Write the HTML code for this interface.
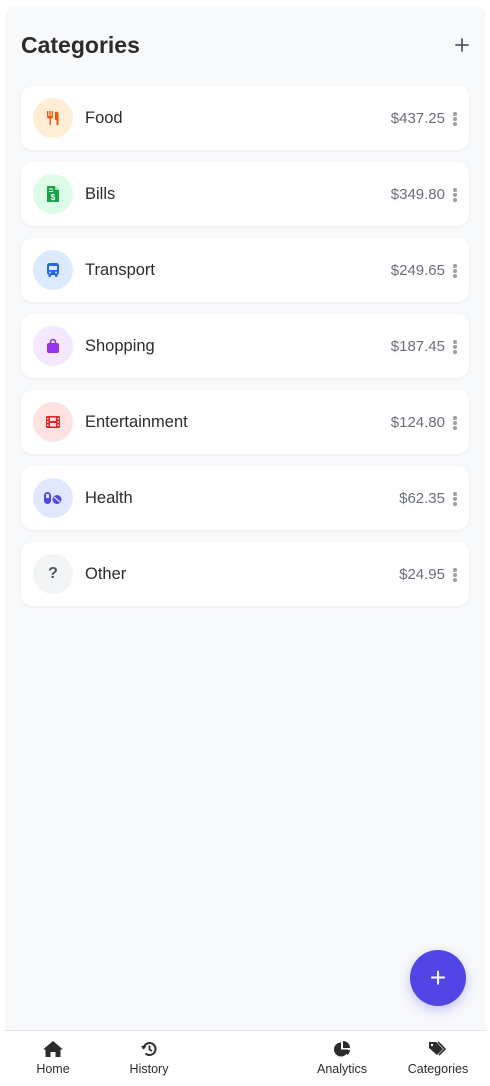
<!DOCTYPE html>
<html><head><meta charset="utf-8"><style>
*{box-sizing:border-box;margin:0;padding:0}
body{width:490px;height:1086px;background:#fff;font-family:"Liberation Sans",sans-serif;position:relative;overflow:hidden;color:#2d2d2d}
.wrap{position:absolute;left:5px;top:6px;width:481px;height:1024px;background:#f8f9fb;border-radius:10px 10px 0 0}
h1{position:absolute;left:21px;top:32px;font-size:23px;font-weight:700;color:#2b2b2b}
.plus{position:absolute;left:455px;top:38px;width:14px;height:14px}
.card{position:absolute;left:21px;width:448px;height:64px;background:#fff;border-radius:12px;box-shadow:0 1px 3px rgba(0,0,0,.06)}
.ic{position:absolute;left:12px;top:12px;width:40px;height:40px;border-radius:50%;display:flex;align-items:center;justify-content:center}
.nm{position:absolute;left:64px;top:23px;font-size:16.5px;font-weight:500;color:#2b2b2b}
.am{position:absolute;right:24px;top:24px;font-size:15px;color:#6b6f78}
.dots{position:absolute;right:12px;top:26px;width:4px}
.dots i{display:block;width:3.5px;height:3.5px;border-radius:50%;background:#9ca0a8;margin-bottom:1.5px}
.fab{position:absolute;left:410px;top:950px;width:56px;height:56px;border-radius:50%;background:#4f46e5;box-shadow:0 4px 12px rgba(79,70,229,.3);color:#fff;font-size:28px;display:flex;align-items:center;justify-content:center}
.nav{position:absolute;left:5px;top:1030px;width:481px;height:56px;border-top:1px solid #e4e5e8;background:#fff}
.ni{position:absolute;top:10px;width:80px;margin-left:-40px;text-align:center;font-size:12.5px;color:#2b2b2b}
.ni svg{display:block;margin:0 auto 5px}
</style></head><body>
<div class="wrap"></div>
<h1>Categories</h1>
<svg class="plus" viewBox="0 0 14 14"><path d="M7 1v12M1 7h12" stroke="#555a66" stroke-width="1.8" stroke-linecap="round"/></svg>

<div class="card" style="top:86px"><div class="ic" style="background:#ffedd5"><svg width="16" height="16" viewBox="0 0 16 16" fill="#ea580c"><path d="M2 1h1.3v5h1V1h1.3v5h1V1h1.3v6c0 1-1 1.6-2 1.6V15H4.6V8.6C3.5 8.6 2 8 2 7z"/><path d="M10 2c2-1 3.5 0 3.5 2v11h-2v-5H10z"/></svg></div><div class="nm">Food</div><div class="am">$437.25</div><div class="dots"><i></i><i></i><i></i></div></div>

<div class="card" style="top:162px"><div class="ic" style="background:#dcfce7"><svg width="14" height="16" viewBox="0 0 14 16"><path d="M1 0h8l4 4v12H1z" fill="#16a34a"/><path d="M9 0v4h4" fill="#86efac"/><text x="7" y="14" font-size="8" font-weight="700" fill="#fff" text-anchor="middle" font-family="Liberation Sans">$</text><path d="M3 3h4M3 5.5h4" stroke="#fff" stroke-width="1"/></svg></div><div class="nm">Bills</div><div class="am">$349.80</div><div class="dots"><i></i><i></i><i></i></div></div>

<div class="card" style="top:238px"><div class="ic" style="background:#dbeafe"><svg width="16" height="16" viewBox="0 0 16 16" fill="#2563eb"><rect x="2" y="1" width="12" height="12" rx="2.5"/><rect x="3.5" y="12" width="2.5" height="3" rx="1"/><rect x="10" y="12" width="2.5" height="3" rx="1"/><rect x="4" y="4" width="8" height="4" fill="#dbeafe"/><circle cx="5" cy="10.5" r="1" fill="#dbeafe"/><circle cx="11" cy="10.5" r="1" fill="#dbeafe"/></svg></div><div class="nm">Transport</div><div class="am">$249.65</div><div class="dots"><i></i><i></i><i></i></div></div>

<div class="card" style="top:314px"><div class="ic" style="background:#f3e8ff"><svg width="16" height="16" viewBox="0 0 16 16"><path d="M5.5 6V4a2.5 2.5 0 015 0v2" stroke="#9333ea" stroke-width="1.6" fill="none"/><rect x="2" y="5" width="12" height="10" rx="2" fill="#9333ea"/></svg></div><div class="nm">Shopping</div><div class="am">$187.45</div><div class="dots"><i></i><i></i><i></i></div></div>

<div class="card" style="top:390px"><div class="ic" style="background:#fee2e2"><svg width="16" height="14" viewBox="0 0 16 14"><rect x="1" y="1" width="14" height="12" rx="1.5" fill="#dc2626"/><rect x="5" y="2.5" width="6" height="3.5" fill="#fee2e2"/><rect x="5" y="8" width="6" height="3.5" fill="#fee2e2"/><rect x="2" y="3" width="1.5" height="1.5" fill="#fee2e2"/><rect x="2" y="6.2" width="1.5" height="1.5" fill="#fee2e2"/><rect x="2" y="9.5" width="1.5" height="1.5" fill="#fee2e2"/><rect x="12.5" y="3" width="1.5" height="1.5" fill="#fee2e2"/><rect x="12.5" y="6.2" width="1.5" height="1.5" fill="#fee2e2"/><rect x="12.5" y="9.5" width="1.5" height="1.5" fill="#fee2e2"/></svg></div><div class="nm">Entertainment</div><div class="am">$124.80</div><div class="dots"><i></i><i></i><i></i></div></div>

<div class="card" style="top:466px"><div class="ic" style="background:#e0e7ff"><svg width="20" height="14" viewBox="0 0 20 14"><rect x="1" y="1" width="7" height="12" rx="3.5" fill="#4f46e5"/><rect x="3" y="3" width="3" height="4" fill="#e0e7ff"/><circle cx="14" cy="8.5" r="4.5" fill="#4f46e5"/><path d="M11 6l6 5" stroke="#e0e7ff" stroke-width="1.3"/></svg></div><div class="nm">Health</div><div class="am">$62.35</div><div class="dots"><i></i><i></i><i></i></div></div>

<div class="card" style="top:542px"><div class="ic" style="background:#f3f4f6;font-weight:700;font-size:16px;color:#4b5563">?</div><div class="nm">Other</div><div class="am">$24.95</div><div class="dots"><i></i><i></i><i></i></div></div>

<div class="fab">+</div>

<div class="nav">
<div class="ni" style="left:48px"><svg width="20" height="16" viewBox="0 0 20 16" fill="#2b2b2b"><path d="M10 0L0 8.5h2.5V16h5v-5h5v5h5V8.5H20z"/></svg>Home</div>
<div class="ni" style="left:144px"><svg width="18" height="16" viewBox="0 0 18 16"><path d="M3.5 8a6 6 0 112 4.5" stroke="#2b2b2b" stroke-width="2" fill="none"/><path d="M1 5l2.5 3.5L6.5 5z" fill="#2b2b2b"/><path d="M9.5 4.5v4l2.5 1.5" stroke="#2b2b2b" stroke-width="1.8" fill="none"/></svg>History</div>
<div class="ni" style="left:337px"><svg width="18" height="16" viewBox="0 0 18 16" fill="#2b2b2b"><path d="M8 1.5a7 7 0 107 7H8z"/><path d="M10 0a7 7 0 017 7h-7z"/><path d="M10 9h7a7 7 0 01-2.5 5z"/></svg>Analytics</div>
<div class="ni" style="left:433px"><svg width="20" height="16" viewBox="0 0 20 16"><path d="M1 1h7l7 7-6 6-8-7z" fill="#2b2b2b"/><circle cx="4" cy="4" r="1.2" fill="#fff"/><path d="M10 1l7 7-6 6" stroke="#2b2b2b" stroke-width="1.6" fill="none"/></svg>Categories</div>
</div>
</body></html>
